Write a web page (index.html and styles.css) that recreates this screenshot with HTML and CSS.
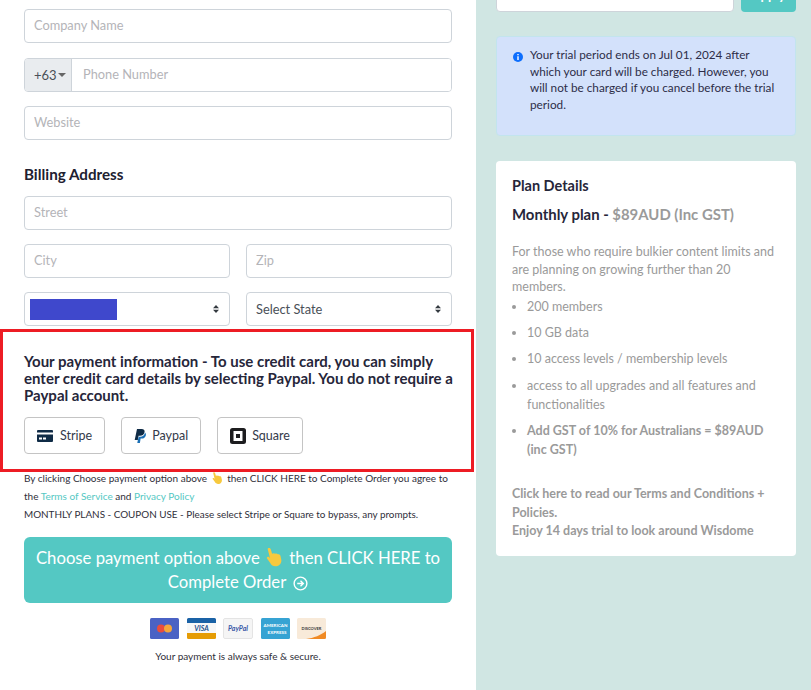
FILE: index.html
```
<!DOCTYPE html>
<html lang="en">
<head>
<meta charset="utf-8">
<title>Checkout</title>
<link rel="stylesheet" href="styles.css">
</head>
<body>
<div class="page">
  <main class="form-col">
    <input class="field" placeholder="Company Name">
    <div class="phone">
      <div class="dial">+63<span class="caret"></span></div>
      <input class="phone-input" placeholder="Phone Number">
    </div>
    <input class="field website" placeholder="Website">
    <h2 class="section-title">Billing Address</h2>
    <input class="field" placeholder="Street">
    <div class="pair">
      <input class="field" placeholder="City">
      <input class="field" placeholder="Zip">
    </div>
    <div class="pair">
      <div class="select">
        <span class="redact"></span>
        <svg class="updown" viewBox="0 0 6 8"><path d="M3 0 6 3.200H0zM3 8 0 4.800H6z"/></svg>
      </div>
      <div class="select">
        <span class="select-text">Select State</span>
        <svg class="updown" viewBox="0 0 6 8"><path d="M3 0 6 3.200H0zM3 8 0 4.800H6z"/></svg>
      </div>
    </div>
    <section class="pay-box">
      <p class="pay-title">Your payment information - To use credit card, you can simply enter credit card details by selecting Paypal. You do not require a Paypal account.</p>
      <div class="pay-buttons">
        <button class="pay-btn stripe">
          <svg width="16" height="12" viewBox="0 0 16 12"><path fill="#0f2b46" d="M1 0h14a1 1 0 0 1 1 1v1.500H0V1a1 1 0 0 1 1-1zM0 4.500h16V11a1 1 0 0 1-1 1H1a1 1 0 0 1-1-1z"/><path fill="#fff" d="M2 7.500h3v2H2zM6 7.500h3v2H6z"/></svg>
          Stripe
        </button>
        <button class="pay-btn paypal">
          <svg width="12" height="14" viewBox="0 0 12 14"><path fill="#0f2b46" d="M3 0h4.500C10 0 11 1.400 10.500 3.300 10 5.700 8.300 6.800 6 6.800H4.600L3.800 11H.7z"/><path fill="#1a6fb5" d="M11 3.500c.9.800 1.100 1.800.8 3-.5 2-2 3.100-4 3.100H6.600L5.900 14H3.300l.4-2.200 1-4h1.500c2.500 0 4.200-1.300 4.800-4.300z"/></svg>
          Paypal
        </button>
        <button class="pay-btn square">
          <svg width="16" height="16" viewBox="0 0 16 16"><path fill="#1d1d1f" fill-rule="evenodd" d="M2.500 0h11A2.500 2.500 0 0 1 16 2.500v11a2.500 2.500 0 0 1-2.500 2.500h-11A2.500 2.500 0 0 1 0 13.500v-11A2.500 2.500 0 0 1 2.500 0zM3.500 3v10h9V3z"/><path fill="#1d1d1f" d="M6 6h4v4H6z"/></svg>
          Square
        </button>
      </div>
    </section>
    <p class="terms">By clicking Choose payment option above <svg class="hand-sm" viewBox="0 0 20 22"><use href="#hand"/></svg> then CLICK HERE to Complete Order you agree to the <a href="#">Terms of Service</a> and <a href="#">Privacy Policy</a></p>
    <p class="notice">MONTHLY PLANS - COUPON USE - Please select Stripe or Square to bypass, any prompts.</p>
    <button class="cta">Choose payment option above <svg class="hand" viewBox="0 0 20 22"><g id="hand"><path fill="#f7c93e" d="M2 1.500c0-1.500 3-1.800 3.500.2l1.700 5.600c1-.9 2.600-1 3.500 0 1-.8 2.500-.5 3.100.5 1.300-.5 2.800.3 3.200 1.800l1 4.700c.6 3.800-1.800 7.200-5.800 7.600-3.400.4-5.700-1-7.200-3.800L1 12.500c-.5-1.400 1.800-2.400 2.800-1.100l1 1.300z"/></g></svg> then CLICK HERE to Complete Order <svg class="arrow" viewBox="0 0 16 16"><circle cx="8" cy="8" r="6.800" fill="none" stroke="#fff" stroke-width="1.500"/><path fill="none" stroke="#fff" stroke-width="1.500" d="M4.500 8h6.500M8 5l3 3-3 3"/></svg></button>
    <div class="cards">
      <svg width="29" height="21" viewBox="0 0 29 21"><rect width="29" height="21" rx="1.500" fill="#4a62c4"/><circle cx="11" cy="10.500" r="4" fill="#ea4d3c"/><circle cx="18" cy="10.500" r="4" fill="#f5a63a"/></svg>
      <svg width="29" height="21" viewBox="0 0 29 21"><rect width="29" height="21" rx="1.500" fill="#f7f7f7"/><path fill="#1a62a6" d="M0 1.500A1.500 1.500 0 0 1 1.500 0h26A1.500 1.500 0 0 1 29 1.500V5H0z"/><path fill="#e59c05" d="M0 15h29v4.500a1.500 1.500 0 0 1-1.500 1.500h-26A1.500 1.500 0 0 1 0 19.500z"/><text class="c-visa" x="14.500" y="13">VISA</text></svg>
      <svg width="30" height="21" viewBox="0 0 30 21"><rect x=".5" y=".5" width="29" height="20" rx="1.500" fill="#f5f5f5" stroke="#e4e4e4"/><text class="c-pp" x="15" y="13">PayPal</text></svg>
      <svg width="29" height="21" viewBox="0 0 29 21"><rect width="29" height="21" rx="1.500" fill="#36a3d3"/><text class="c-ax" x="14.500" y="9">AMERICAN</text><text class="c-ax" x="16" y="15.500">EXPRESS</text></svg>
      <svg width="29" height="21" viewBox="0 0 29 21"><rect width="29" height="21" rx="1.500" fill="#f8ead9"/><path fill="#f08a24" d="M9 21c8-1 15-4 20-8v6.500a1.500 1.500 0 0 1-1.500 1.500z"/><text class="c-di" x="14.500" y="12">DISCOVER</text></svg>
    </div>
    <p class="secure">Your payment is always safe &amp; secure.</p>
  </main>
  <aside class="side-col">
    <div class="coupon">
      <div class="coupon-input"></div>
      <button class="apply">Apply</button>
    </div>
    <div class="alert">
      <svg class="info" viewBox="0 0 10 10"><circle cx="5" cy="5" r="5" fill="#0d6efd"/><path fill="#fff" d="M4.300 2h1.400v1.300H4.300zM4.300 4.200h1.400V8H4.300z"/></svg>
      <p>Your trial period ends on Jul 01, 2024 after which your card will be charged. However, you will not be charged if you cancel before the trial period.</p>
    </div>
    <div class="plan">
      <h3 class="plan-title">Plan Details</h3>
      <p class="plan-name">Monthly plan - <span class="price">$89AUD (Inc GST)</span></p>
      <p class="plan-desc">For those who require bulkier content limits and are planning on growing further than 20 members.</p>
      <ul class="plan-list">
        <li>200 members</li>
        <li>10 GB data</li>
        <li>10 access levels / membership levels</li>
        <li>access to all upgrades and all features and functionalities</li>
        <li class="strong">Add GST of 10% for Australians = $89AUD (inc GST)</li>
      </ul>
      <p class="plan-foot">Click here to read our Terms and Conditions + Policies.<br>Enjoy 14 days trial to look around Wisdome</p>
    </div>
  </aside>
</div>
</body>
</html>
```
FILE: styles.css
```
* { box-sizing: border-box; }
html, body { margin: 0; padding: 0; }
body { font-family: Lato, "Open Sans", sans-serif; color: #2b2b36; }
.page { display: grid; grid-template-columns: 476px 1fr; height: 690px; overflow: hidden; background: #d0e6e3; }
.form-col { background: #fff; padding-top: 9px; display: flex; flex-direction: column; }
.field, .phone, .pair, .section-title, .terms, .notice, .cta { margin-left: 24px; width: 428px; }
.field { display: block; height: 34px; border: 1px solid #ced4da; border-radius: 4px; padding: 0 9px 2px; font: 12.800px Lato, sans-serif; color: #495057; outline: 0; }
input::placeholder { color: #b4b4b8; opacity: 1; }
.phone { display: flex; height: 34px; margin-top: 15px; border: 1px solid #ced4da; border-radius: 4px; overflow: hidden; }
.dial { width: 47px; background: #e9ecef; border-right: 1px solid #ced4da; display: flex; align-items: center; padding: 0 0 1px 9px; font-size: 13px; color: #495057; }
.caret { width: 0; height: 0; border: 4px solid transparent; border-top: 4px solid #666; border-bottom: 0; margin-left: 1px; }
.phone-input { flex: 1; border: 0; padding: 0 11px 2px; font: 12.800px Lato, sans-serif; outline: 0; }
.website { margin-top: 14px; }
.section-title { margin-top: 25px; margin-bottom: 13px; font-size: 15.200px; line-height: 18px; font-weight: 700; color: #202030; }
.pair { display: grid; grid-template-columns: 206px 206px; gap: 16px; margin-top: 14px; }
.pair .field { margin: 0; width: 100%; }
.select { height: 34px; border: 1px solid #ced4da; border-radius: 4px; display: flex; align-items: center; justify-content: space-between; padding: 0 10px 1px 9px; }
.redact { width: 87px; height: 21px; background: #3f48cc; margin: 1px 0 0 -4px; }
.select-text { font-size: 12.800px; color: #495057; }
.updown { width: 6px; height: 8px; fill: #343a40; }
.pay-box { margin-top: 3px; width: 474px; height: 143px; border: 3px solid #ed1c24; padding: 21px 10px 0 21px; }
.pay-title { margin: 0; font-size: 15px; line-height: 17px; font-weight: 700; color: #26263a; }
.pay-buttons { display: flex; gap: 16px; margin-top: 13px; }
.pay-btn { height: 37px; background: #fff; border: 1px solid #c4c4c4; border-radius: 4px; display: flex; align-items: center; gap: 7px; padding: 0 12px; font: 12.500px Lato, sans-serif; color: #343a4a; }
.paypal, .square { gap: 6px; }
.terms { margin: -3px 0 0 24px; font-size: 10px; line-height: 18px; color: #2f2f3a; }
.terms a { color: #54c8c3; text-decoration: none; }
.hand-sm { width: 11px; height: 12px; vertical-align: -2px; margin: 0 2px; }
.notice { margin-top: 0; margin-bottom: 0; font-size: 9.900px; line-height: 18px; color: #2f2f3a; }
.cta { margin-top: 14px; height: 66px; background: #54c8c3; border: 0; border-radius: 6px; color: #fff; font: 16.700px/24px Lato, sans-serif; padding: 0 10px; }
.hand { width: 17px; height: 20px; vertical-align: -3px; margin: 0 2px; }
.arrow { width: 15px; height: 15px; vertical-align: -3px; margin-left: 3px; }
.cards { display: flex; gap: 7.500px; justify-content: center; margin-top: 15px; margin-left: 0; width: 476px; }
.secure { margin: 8px 0 0; text-align: center; font-size: 10px; line-height: 18px; color: #2f2f3a; }
.c-visa { font: italic 700 7px Lato, sans-serif; fill: #1a4f8c; text-anchor: middle; }
.c-pp { font: italic 700 7px Lato, sans-serif; fill: #3a5aa8; text-anchor: middle; }
.c-ax { font: 700 4.500px Lato, sans-serif; fill: #fff; text-anchor: middle; }
.c-di { font: 700 4px Lato, sans-serif; fill: #333; text-anchor: middle; }
.side-col { padding: 0 15px 0 20px; display: flex; flex-direction: column; }
.coupon { display: flex; height: 12px; gap: 7px; align-items: flex-end; overflow: hidden; flex: none; }
.coupon-input { flex: 1; height: 34px; background: #fff; border: 1px solid #ced4da; border-radius: 4px; flex-shrink: 1; }
.apply { width: 55px; flex: none; height: 34px; border: 0; border-radius: 4px; background: #54c8c3; color: #fff; font: 700 13px/34px Lato, sans-serif; padding: 0; }
.alert { flex: none; margin-top: 24px; height: 100px; background: #d3e1fb; border: 1px solid #c2e4ee; border-radius: 4px; padding: 10px 20px 0 16px; display: flex; gap: 7px; align-items: flex-start; }
.info { width: 10px; height: 10px; flex: none; margin-top: 5px; }
.alert p { margin: 0; font-size: 11.750px; line-height: 16.500px; color: #2d2d48; }
.plan { flex: none; margin-top: 25px; height: 395px; background: #fff; border-radius: 4px; padding: 16px; }
.plan-title { margin: 0; font-size: 14.500px; line-height: 18px; font-weight: 700; color: #26263a; }
.plan-name { margin: 10px 0 0; font-size: 14.900px; line-height: 18px; font-weight: 700; color: #26263a; }
.price { color: #9a9a9a; }
.plan-desc { margin: 20px 0 0; font-size: 12.500px; line-height: 17.500px; color: #9a9a9a; }
.plan-list { margin: 2px 0 0; padding: 0 0 0 15px; font-size: 12.500px; line-height: 18.800px; color: #9a9a9a; }
.plan-list li { margin-bottom: 7.700px; }
.plan-list .strong { font-weight: 700; }
.plan-foot { margin: 25.500px 0 0; font-size: 12.500px; line-height: 18.500px; font-weight: 700; color: #9a9a9a; }
```
